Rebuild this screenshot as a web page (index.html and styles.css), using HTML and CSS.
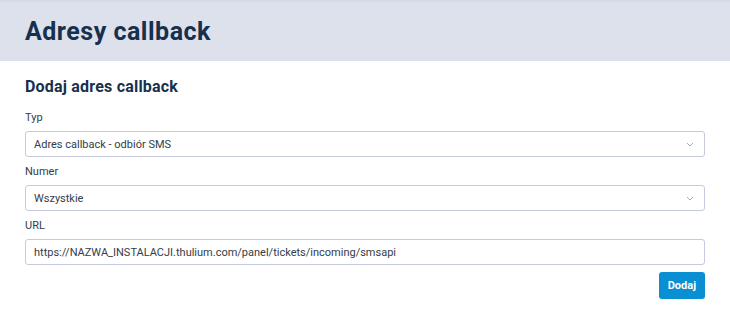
FILE: index.html
```html
<!DOCTYPE html>
<html lang="pl">
<head>
  <meta charset="UTF-8">
  <meta name="viewport" content="width=device-width, initial-scale=1.0">
  <title>Adresy callback</title>
  <link rel="stylesheet" href="styles.css">
</head>
<body>
  <header class="page-header">
    <h1>Adresy callback</h1>
  </header>
  <main class="content">
    <h2>Dodaj adres callback</h2>
    <form class="callback-form">
      <label class="field">
        <span class="field-label">Typ</span>
        <span class="select">
          <span>Adres callback - odbiór SMS</span>
          <svg width="8" height="5" viewBox="0 0 8 5"><path d="M1 1l3 3 3-3" fill="none" stroke="#a6adbd" stroke-width="1"/></svg>
        </span>
      </label>
      <label class="field">
        <span class="field-label">Numer</span>
        <span class="select">
          <span>Wszystkie</span>
          <svg width="8" height="5" viewBox="0 0 8 5"><path d="M1 1l3 3 3-3" fill="none" stroke="#a6adbd" stroke-width="1"/></svg>
        </span>
      </label>
      <label class="field">
        <span class="field-label">URL</span>
        <input class="input" type="text" value="https://NAZWA_INSTALACJI.thulium.com/panel/tickets/incoming/smsapi">
      </label>
      <div class="actions">
        <button type="button" class="btn">Dodaj</button>
      </div>
    </form>
  </main>
</body>
</html>
```

FILE: styles.css
```css
body {
  margin: 0;
  font-family: Roboto, "Noto Sans", sans-serif;
  color: #1d3049;
  background: #fff;
}
.page-header {
  background: #dce1ec;
  border-top: 2px solid #d3d9e6;
  height: 59px;
  padding: 0 25px;
  display: flex;
  align-items: center;
}
.page-header h1 {
  margin: 0;
  font-size: 25px;
  font-weight: 700;
  letter-spacing: 0.5px;
  color: #17304d;
}
.content {
  padding: 16px 25px 0 25px;
}
.content h2 {
  margin: 0 0 15px 0;
  font-size: 16px;
  font-weight: 700;
  letter-spacing: 0.2px;
  color: #17304d;
}
.callback-form {
  display: flex;
  flex-direction: column;
  gap: 8px;
}
.field {
  display: flex;
  flex-direction: column;
  gap: 7px;
}
.field-label {
  font-size: 11px;
  color: #333d4a;
}
.select,
.input {
  box-sizing: border-box;
  height: 26px;
  width: 100%;
  border: 1px solid #c5cadf;
  border-radius: 3px;
  padding: 0 8px;
  font-family: inherit;
  font-size: 11px;
  color: #333d4a;
  background: #fff;
}
.select {
  display: flex;
  align-items: center;
  justify-content: space-between;
}
.select svg {
  margin-right: 2px;
}
.actions {
  display: flex;
  justify-content: flex-end;
  margin-top: -1px;
}
.btn {
  height: 27px;
  padding: 0 9px;
  border: none;
  border-radius: 3px;
  background: #0a8fd3;
  color: #fff;
  font-family: inherit;
  font-size: 11px;
  font-weight: 700;
}
```
